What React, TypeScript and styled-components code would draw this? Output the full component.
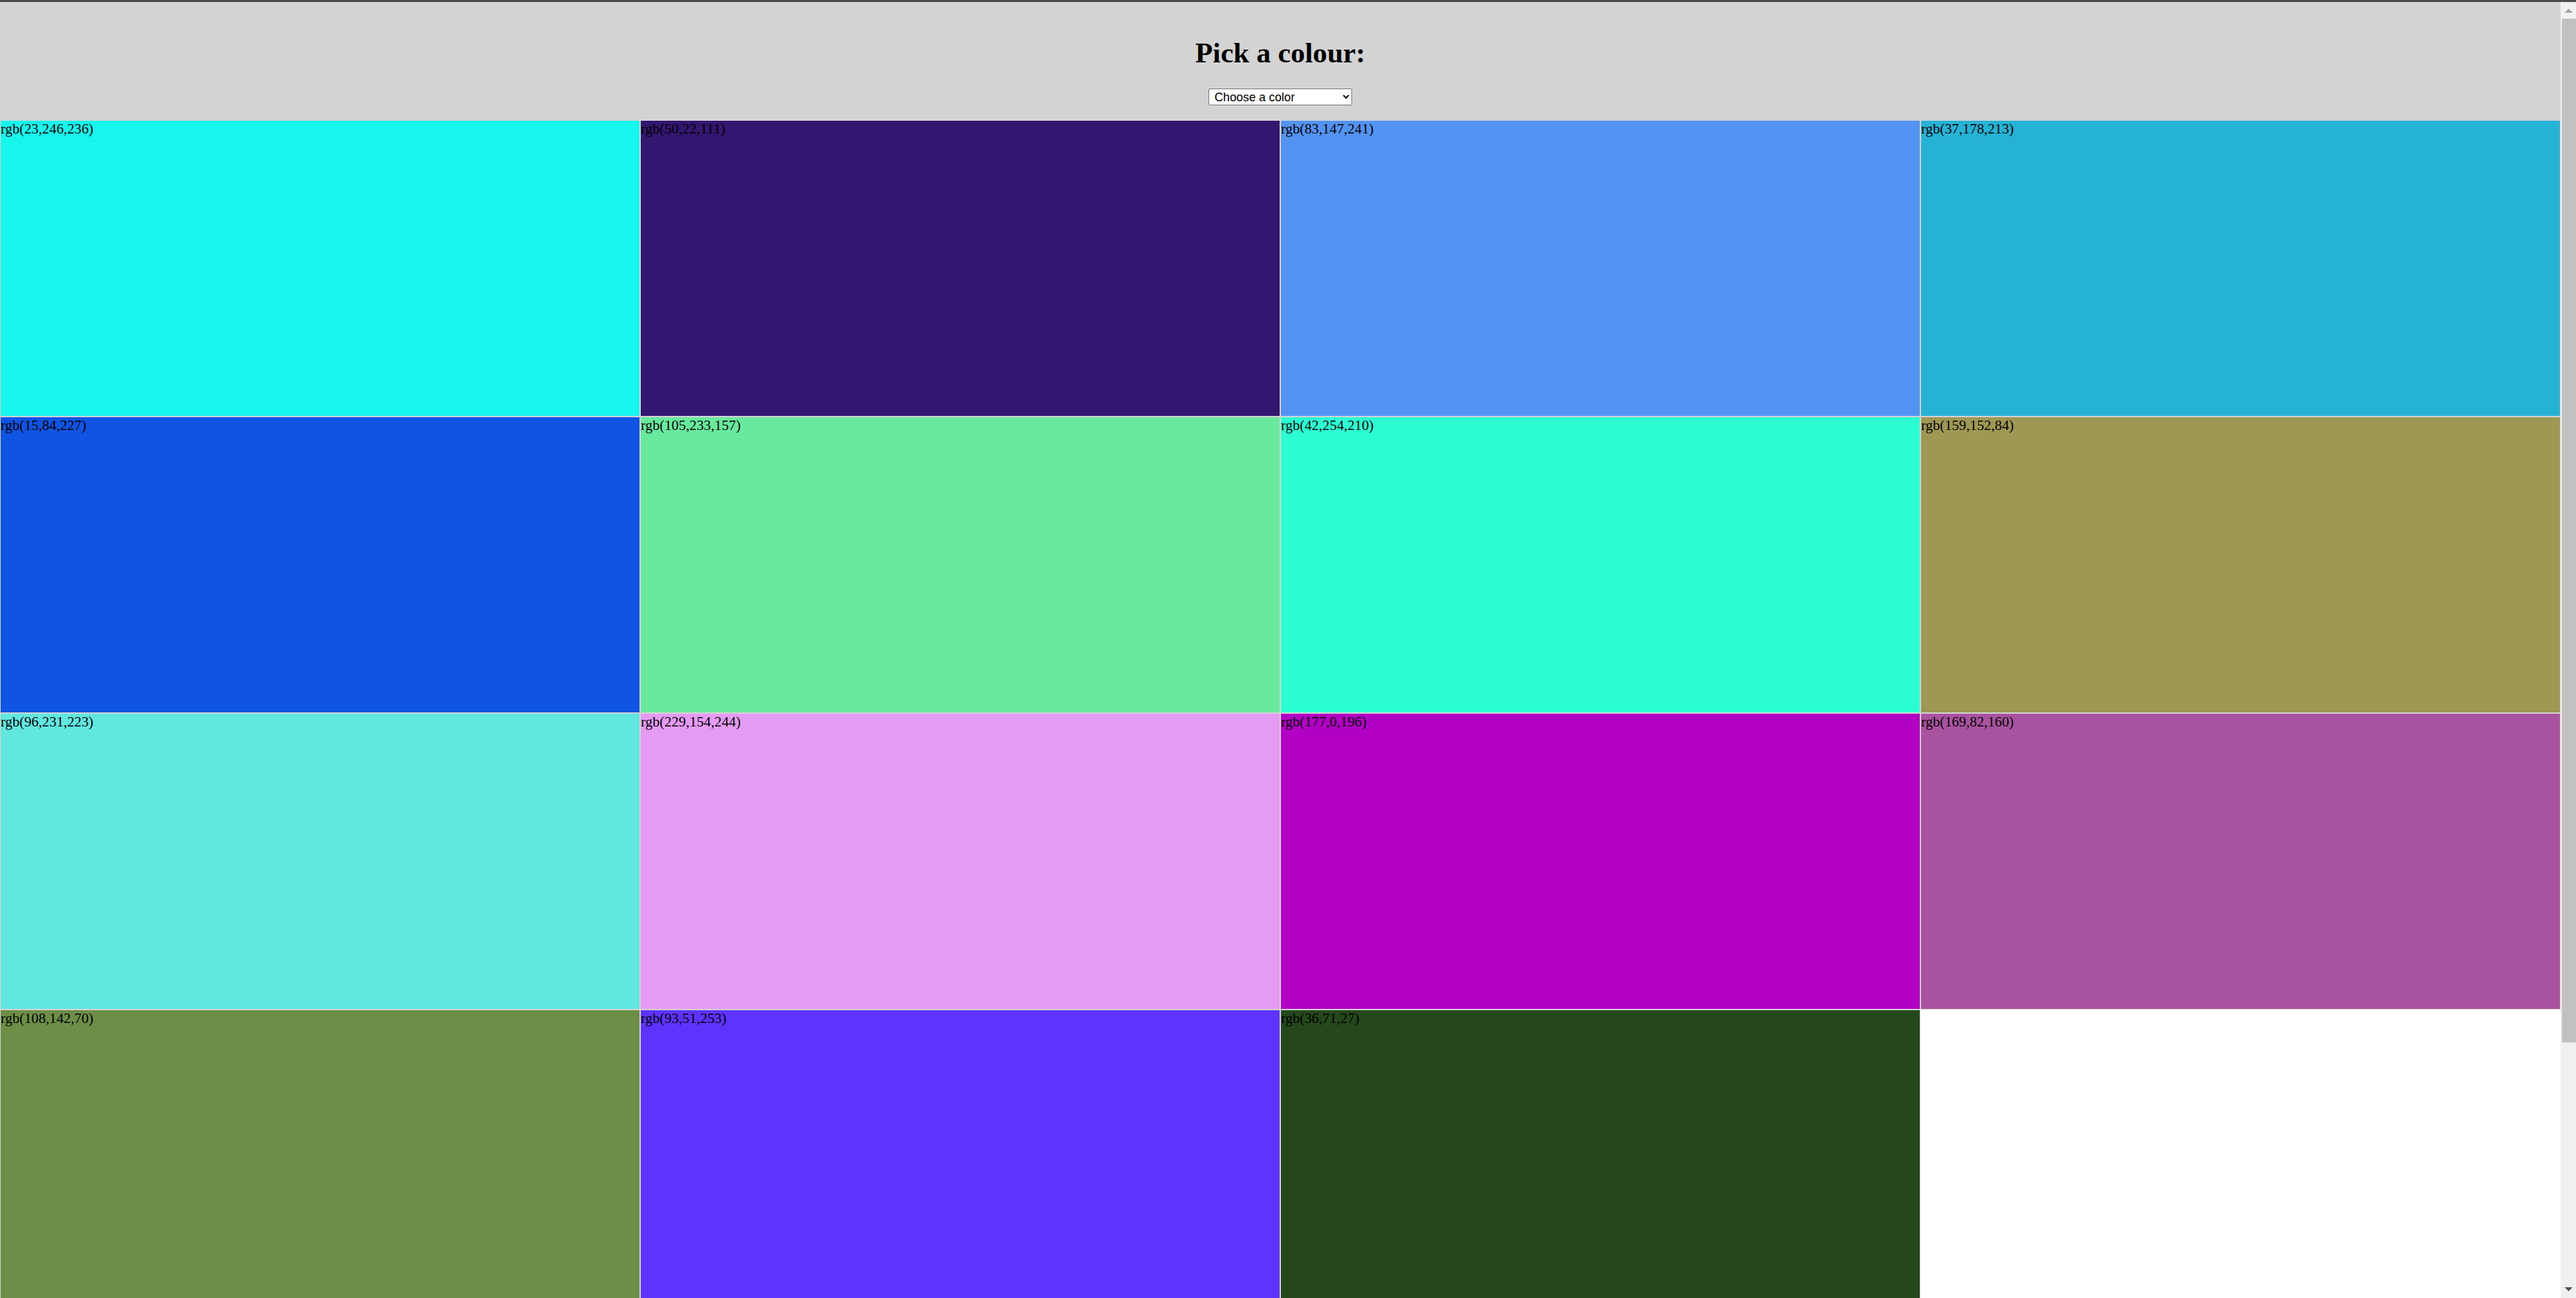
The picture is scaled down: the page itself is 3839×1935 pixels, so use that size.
import styled, { createGlobalStyle } from "styled-components";

const swatches: [number, number, number][] = [
  [23, 246, 236],
  [50, 22, 111],
  [83, 147, 241],
  [37, 178, 213],
  [15, 84, 227],
  [105, 233, 157],
  [42, 254, 210],
  [159, 152, 84],
  [96, 231, 223],
  [229, 154, 244],
  [177, 0, 196],
  [169, 82, 160],
  [108, 142, 70],
  [93, 51, 253],
  [36, 71, 27],
];

const GlobalStyle = createGlobalStyle`
  html, body {
    margin: 0;
    padding: 0;
    background: #ffffff;
    font-family: "Liberation Serif", "Times New Roman", serif;
  }
`;

function App() {
  return (
    <>
      <GlobalStyle />
      <Page>
        <Header>
          <Title>Pick a colour:</Title>
          <Picker defaultValue="">
            <option value="">Choose a color</option>
            {swatches.map(([r, g, b]) => (
              <option key={`${r}-${g}-${b}`} value={`rgb(${r},${g},${b})`}>
                rgb({r},{g},{b})
              </option>
            ))}
          </Picker>
        </Header>
        <Grid>
          {swatches.map(([r, g, b]) => {
            const colour = `rgb(${r},${g},${b})`;
            return (
              <Swatch key={colour} $bg={colour}>
                <Label>{colour}</Label>
              </Swatch>
            );
          })}
        </Grid>
      </Page>
      <ScrollBar aria-hidden="true">
        <ArrowButton>
          <svg width="12" height="7" viewBox="0 0 12 7">
            <polygon points="0,7 6,1 12,7" fill="#a3a3a3" />
          </svg>
        </ArrowButton>
        <Track>
          <Thumb />
        </Track>
        <ArrowButton>
          <svg width="12" height="7" viewBox="0 0 12 7">
            <polygon points="0,0 12,0 6,6" fill="#505050" />
          </svg>
        </ArrowButton>
      </ScrollBar>
    </>
  );
}

const Page = styled.div`
  padding-right: 23px;
`;

const Header = styled.header`
  background: #d3d3d3;
  border-top: 3px solid #4b4b50;
  padding: 22px 0 22px;
  text-align: center;
`;

const Title = styled.h1`
  margin: 29px 0 29px;
  font-family: "Liberation Serif", "Times New Roman", serif;
  font-size: 42.67px;
  font-weight: 700;
  line-height: 49px;
  color: #000000;
`;

const Picker = styled.select`
  display: block;
  margin: 0 auto;
  width: 214px;
  height: 25px;
  padding: 0 4px;
  font-family: "Liberation Sans", Arial, sans-serif;
  font-size: 17.8px;
  color: #000000;
  background: #ffffff;
  border: 1px solid #767676;
  border-radius: 2px;
`;

const Grid = styled.main`
  display: grid;
  grid-template-columns: repeat(4, 1fr);
`;

const Swatch = styled.div<{ $bg: string }>`
  height: 440px;
  border: 1px solid #d3d3d3;
  background: ${({ $bg }) => $bg};
`;

const Label = styled.span`
  display: block;
  font-family: "Liberation Serif", "Times New Roman", serif;
  font-size: 21.33px;
  line-height: 24px;
  color: #000000;
`;

const ScrollBar = styled.div`
  position: fixed;
  top: 0;
  right: 0;
  width: 23px;
  height: 100vh;
  display: flex;
  flex-direction: column;
  background: #f0f0f0;
  border-top: 3px solid #4b4b50;
  box-sizing: border-box;
`;

const ArrowButton = styled.div`
  flex: 0 0 25px;
  display: flex;
  align-items: center;
  justify-content: center;
`;

const Track = styled.div`
  flex: 1;
  padding-left: 2px;
`;

const Thumb = styled.div`
  height: 1526px;
  background: #c1c1c1;
`;

export default App;
